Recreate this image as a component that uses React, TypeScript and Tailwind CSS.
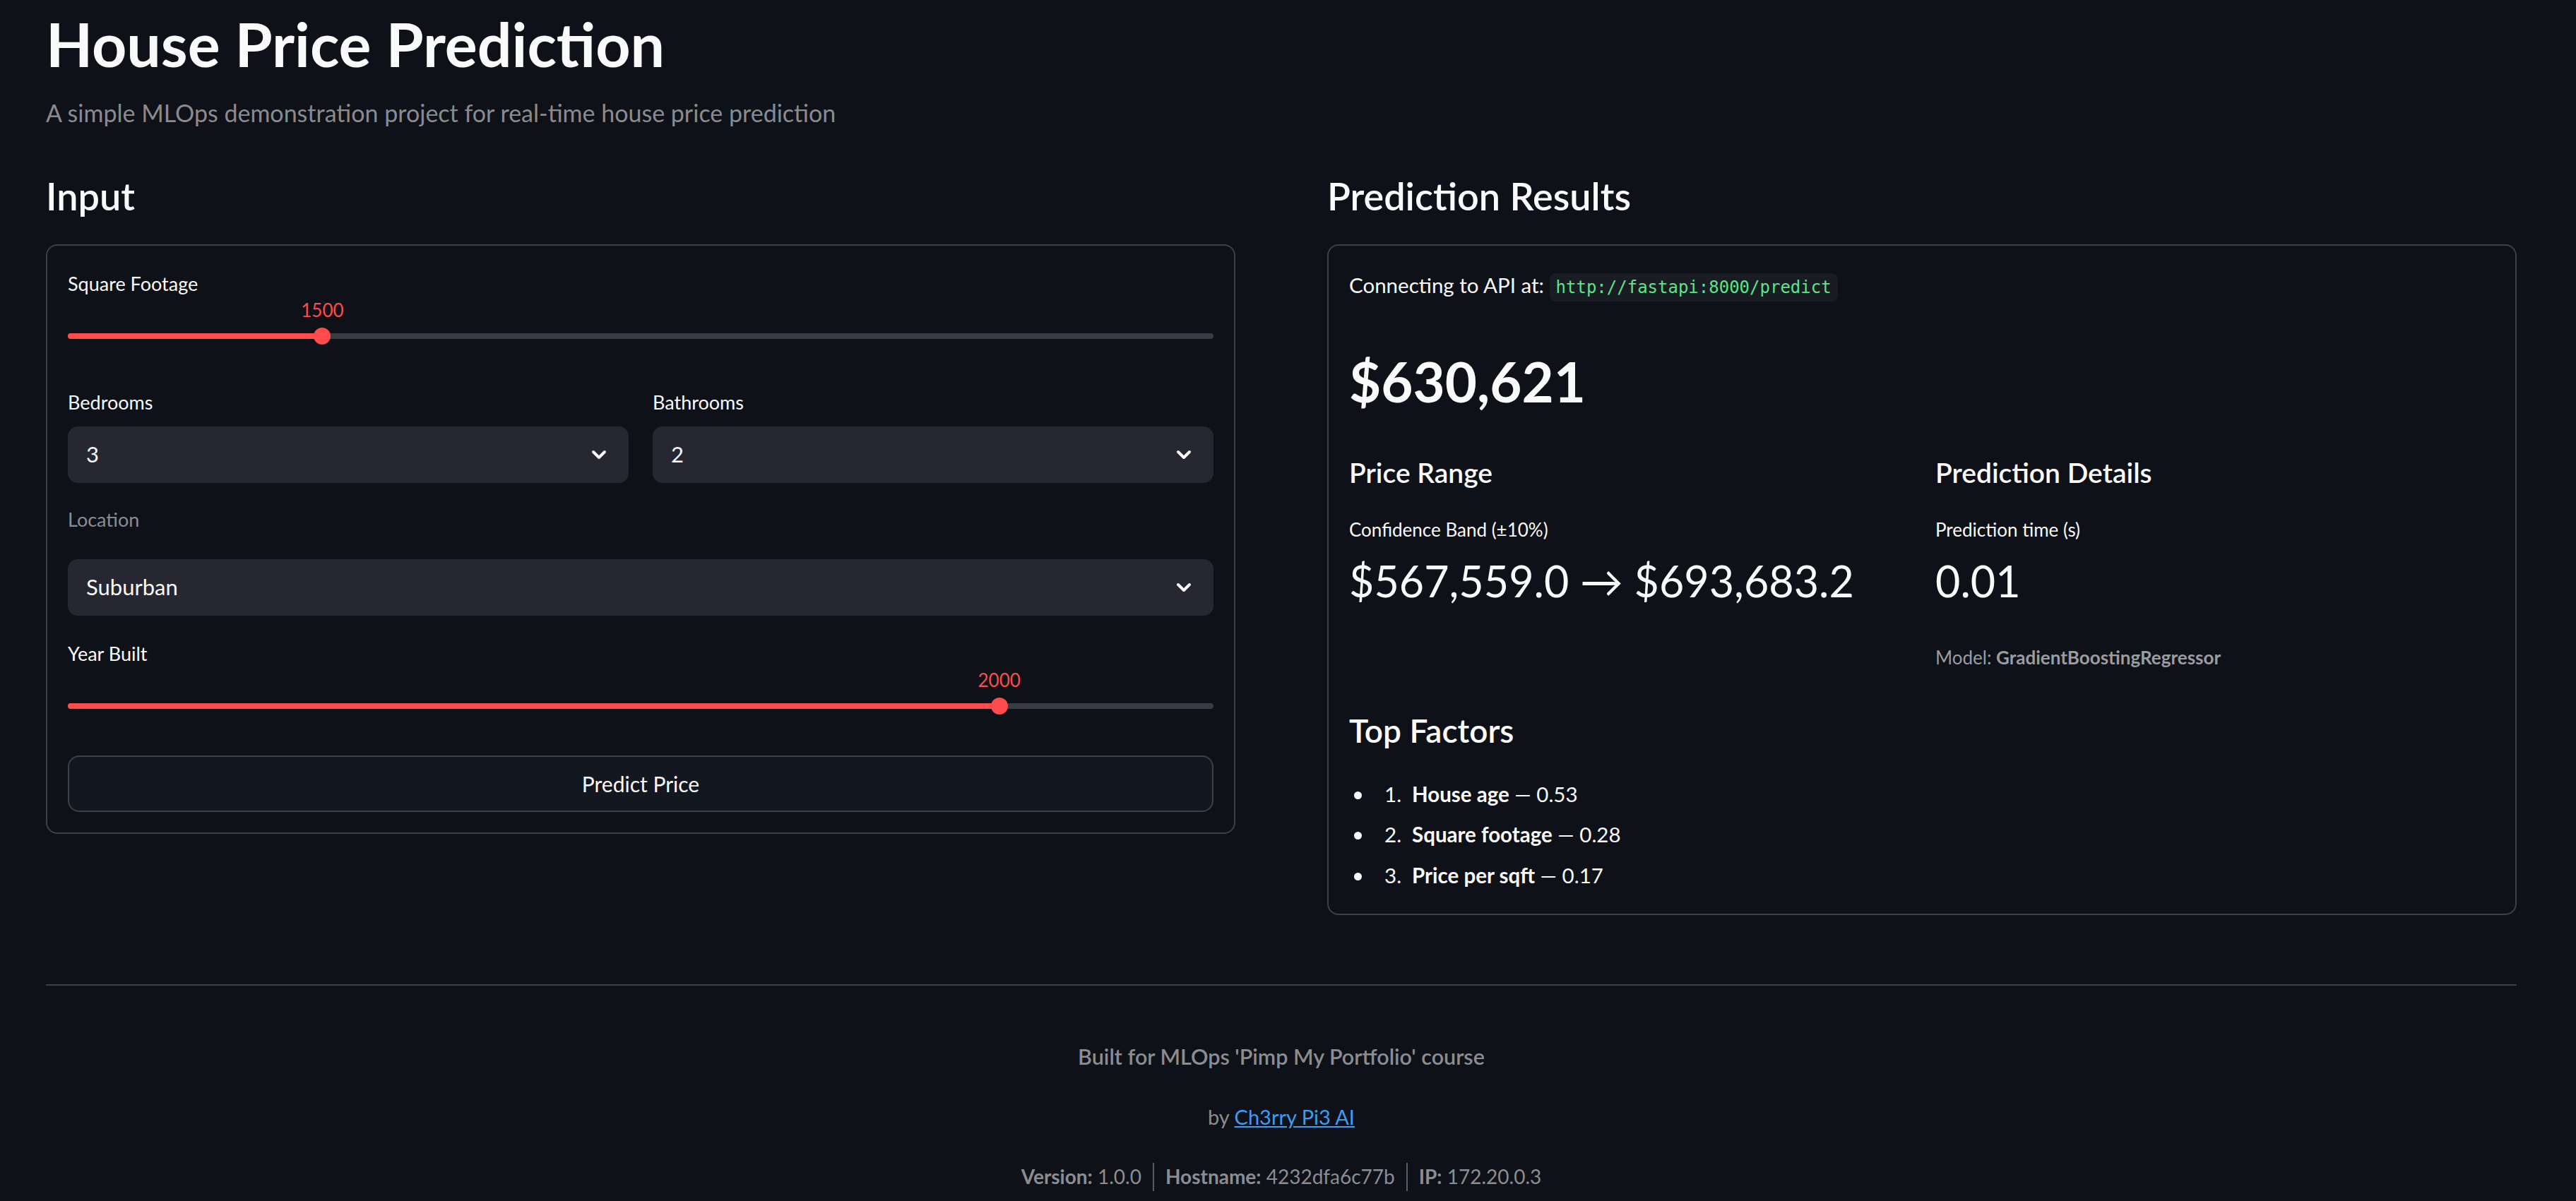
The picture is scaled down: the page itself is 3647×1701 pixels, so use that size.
import React from "react";

type SliderProps = { label: string; value: number; min: number; max: number };

function Slider({ label, value, min, max }: SliderProps) {
  const pct = ((value - min) / (max - min)) * 100;
  return (
    <div>
      <div className="text-[27px] leading-[1.2]">{label}</div>
      <div className="relative mt-[6px] h-[32px]">
        <span
          className="absolute top-0 -translate-x-1/2 text-[26px] leading-[1.2] text-[#ff4b4b]"
          style={{ left: `${pct}%` }}
        >
          {value}
        </span>
      </div>
      <div className="relative mt-[8px] flex h-[24px] items-center">
        <div className="h-[8px] w-full rounded-[4px] bg-[#383b44]">
          <div className="h-full rounded-[4px] bg-[#ff4b4b]" style={{ width: `${pct}%` }} />
        </div>
        <div
          className="absolute top-0 h-[24px] w-[24px] -translate-x-1/2 rounded-full bg-[#ff4b4b]"
          style={{ left: `${pct}%` }}
        />
      </div>
    </div>
  );
}

function Chevron() {
  return (
    <svg width="22" height="14" viewBox="0 0 22 14" fill="none">
      <path d="M3 3 L11 11 L19 3" stroke="#fafafa" strokeWidth="4" strokeLinecap="round" strokeLinejoin="round" />
    </svg>
  );
}

function Select({ value }: { value: string }) {
  return (
    <div className="flex h-[80px] items-center justify-between rounded-[14px] bg-[#262730] pl-[26px] pr-[31px] text-[31px] leading-[1.2]">
      <span>{value}</span>
      <Chevron />
    </div>
  );
}

const factors = [
  { name: "House age", score: "0.53" },
  { name: "Square footage", score: "0.28" },
  { name: "Price per sqft", score: "0.17" },
];

export default function App() {
  return (
    <div className="min-h-screen bg-[#0e1117] font-['Lato','Noto_Sans',sans-serif] text-[#fafafa]">
      <div className="ml-[65px] w-[3498px] pt-[10px] pb-[20px]">
        <h1 className="text-[86px] font-bold leading-[1.2]">House Price Prediction</h1>
        <p className="mt-[27px] text-[34px] leading-[1.2] text-[#898b90]">
          A simple MLOps demonstration project for real-time house price prediction
        </p>

        <div className="mt-[65px] grid grid-cols-2 gap-x-[130px]">
          {/* Input column */}
          <div>
            <h3 className="text-[54px] font-semibold leading-[1.2]">Input</h3>
            <div className="mt-[35px] rounded-[16px] border-2 border-[#3d4044] px-[29px] pt-[38px] pb-[29px]">
              <Slider label="Square Footage" value={1500} min={500} max={5000} />

              <div className="mt-[66px] grid grid-cols-2 gap-x-[34px]">
                <div>
                  <div className="text-[27px] leading-[1.2]">Bedrooms</div>
                  <div className="mt-[17px]">
                    <Select value="3" />
                  </div>
                </div>
                <div>
                  <div className="text-[27px] leading-[1.2]">Bathrooms</div>
                  <div className="mt-[17px]">
                    <Select value="2" />
                  </div>
                </div>
              </div>

              <div className="mt-[36px] text-[27px] leading-[1.2] text-[#8b8d93]">Location</div>
              <div className="mt-[40px]">
                <Select value="Suburban" />
              </div>

              <div className="mt-[38px]">
                <Slider label="Year Built" value={2000} min={1900} max={2023} />
              </div>

              <button className="mt-[58px] flex h-[80px] w-full items-center justify-center rounded-[16px] border-2 border-[#3d4044] bg-[#131720] text-[30px] leading-[1.2]">
                Predict Price
              </button>
            </div>
          </div>

          {/* Results column */}
          <div>
            <h3 className="text-[54px] font-semibold leading-[1.2]">Prediction Results</h3>
            <div className="mt-[35px] rounded-[16px] border-2 border-[#3d4044] px-[29px] pt-[38px] pb-[26px]">
              <p className="text-[29.5px] leading-[1.2]">
                Connecting to API at:{" "}
                <code className="inline-block rounded-[8px] bg-[#1a1c23] px-[9px] font-['DejaVu_Sans_Mono',monospace] text-[24px] leading-[40px] text-[#5ce488]">
                  http://fastapi:8000/predict
                </code>
              </p>

              <div className="mt-[67px] text-[78px] font-bold leading-[1.2]">$630,621</div>

              <div className="mt-[59px] grid grid-cols-[798px_1fr] gap-x-[32px]">
                <div>
                  <h5 className="text-[39px] font-semibold leading-[1.2]">Price Range</h5>
                  <div className="mt-[42px] text-[26px] leading-[1.2]">Confidence Band (±10%)</div>
                  <div className="mt-[20px] text-[61px] leading-[1.2]">$567,559.0 → $693,683.2</div>
                </div>
                <div>
                  <h5 className="text-[39px] font-semibold leading-[1.2]">Prediction Details</h5>
                  <div className="mt-[42px] text-[26px] leading-[1.2]">Prediction time (s)</div>
                  <div className="mt-[20px] text-[61px] leading-[1.2]">0.01</div>
                  <div className="mt-[56px] text-[26px] leading-[1.2] text-[#9a9ca0]">
                    Model: <span className="font-bold">GradientBoostingRegressor</span>
                  </div>
                </div>
              </div>

              <h4 className="mt-[60px] text-[46px] font-semibold leading-[1.2]">Top Factors</h4>
              <ul className="mt-[34px]">
                {factors.map((f, i) => (
                  <li key={f.name} className="text-[29.5px] leading-[57.5px]">
                    <span className="ml-[7px] mr-[32px] inline-block h-[11px] w-[11px] rounded-full bg-[#fafafa] align-[4px]" />
                    <span className="inline-block w-[39px]">{i + 1}.</span>
                    <span className="font-bold">{f.name}</span> — {f.score}
                  </li>
                ))}
              </ul>
            </div>
          </div>
        </div>

        {/* Footer */}
        <div className="mt-[98px] h-[2px] bg-[#3d4044]" />
        <div className="text-center leading-[1.2] text-[#8b8d92]">
          <p className="mt-[82px] text-[30.5px] font-semibold">Built for MLOps 'Pimp My Portfolio' course</p>
          <p className="mt-[50px] text-[29px]">
            by{" "}
            <a href="#" className="text-[#3d9df3] underline">
              Ch3rry Pi3 AI
            </a>
          </p>
          <div className="mt-[47px] flex items-center justify-center text-[28px]">
            <span>
              <span className="font-bold">Version:</span> 1.0.0
            </span>
            <span className="mx-[16px] h-[40px] w-[2px] bg-[#5a5c62]" />
            <span>
              <span className="font-bold">Hostname:</span> 4232dfa6c77b
            </span>
            <span className="mx-[16px] h-[40px] w-[2px] bg-[#5a5c62]" />
            <span>
              <span className="font-bold">IP:</span> 172.20.0.3
            </span>
          </div>
        </div>
      </div>
    </div>
  );
}
